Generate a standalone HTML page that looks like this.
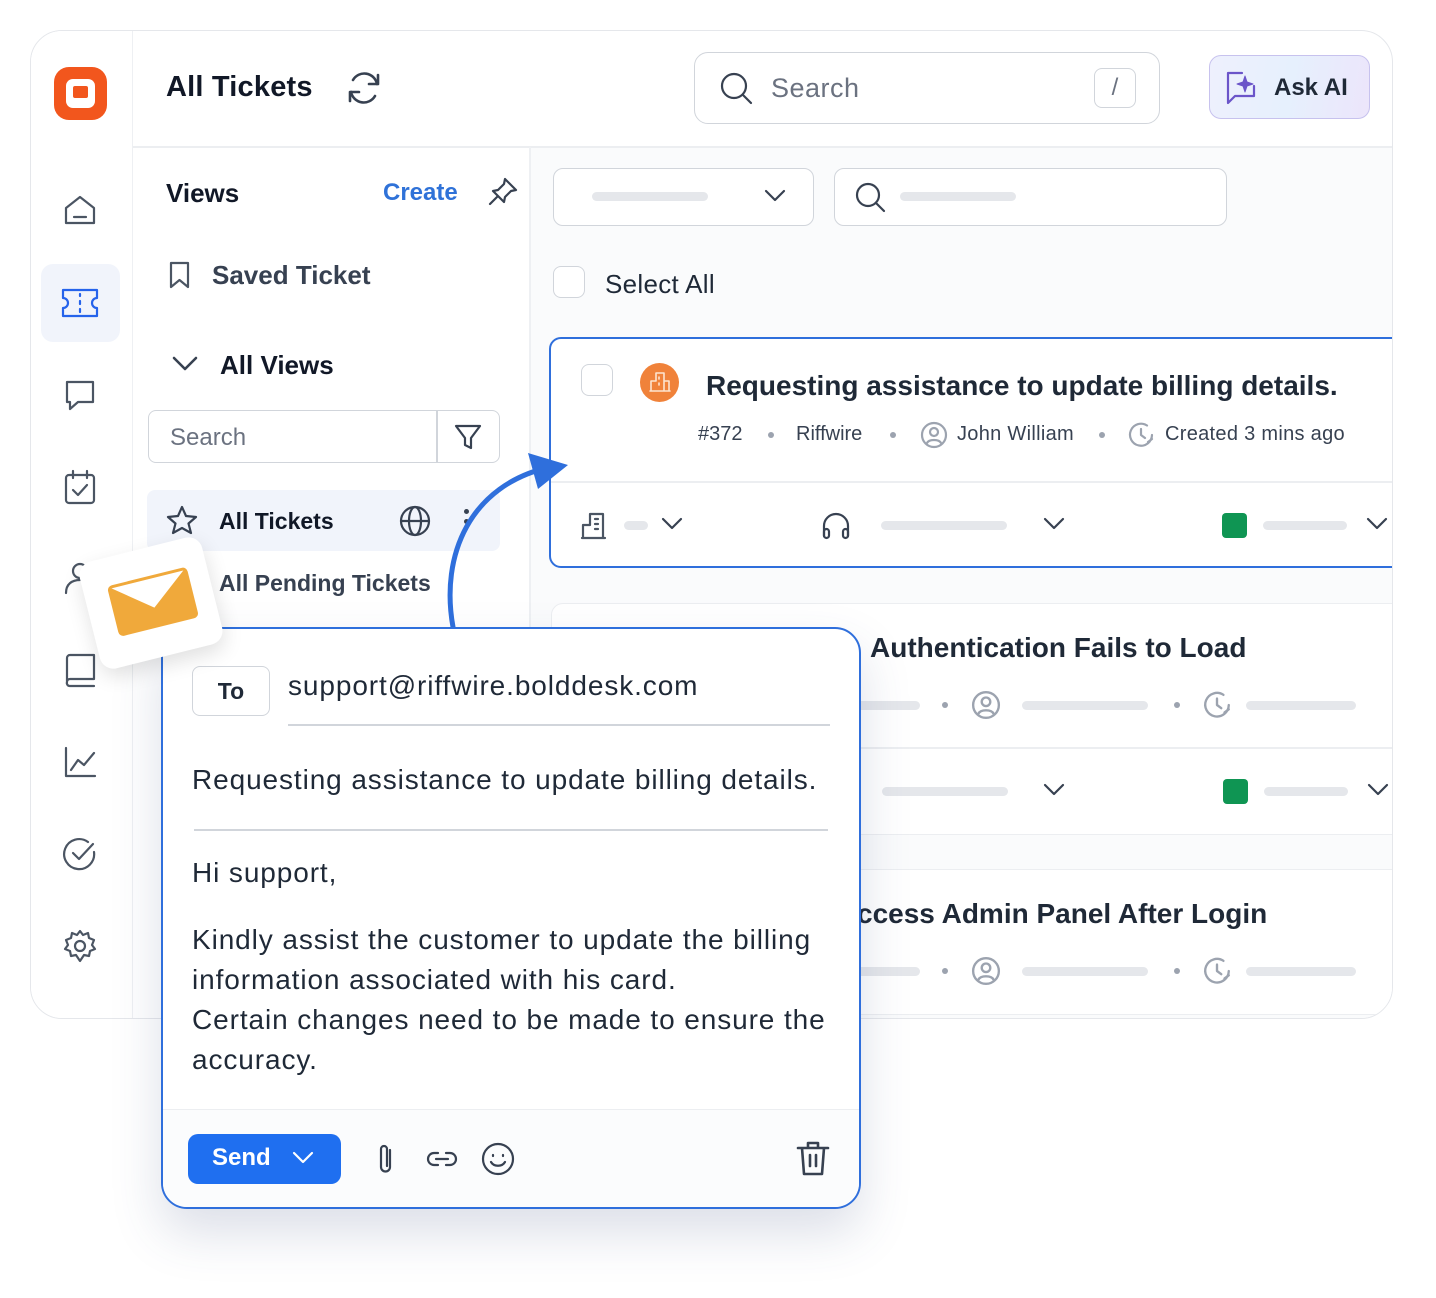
<!DOCTYPE html>
<html><head><meta charset="utf-8">
<style>
*{box-sizing:border-box;margin:0;padding:0}
body{width:1436px;height:1298px;background:#fff;font-family:"Liberation Sans",sans-serif;color:#1f2937;position:relative;overflow:hidden}
.a{position:absolute}
.ic{position:absolute;fill:none;stroke:#4b5563;stroke-width:2.2;stroke-linecap:round;stroke-linejoin:round}
.bar{position:absolute;height:9px;border-radius:5px;background:#e5e7eb}
.t{position:absolute;white-space:nowrap}
.em{font-size:28px;letter-spacing:0.9px}
</style></head><body>
<!-- outer card -->
<div class="a" style="left:30px;top:30px;width:1363px;height:989px;border:1.5px solid #e5e7eb;border-radius:32px;background:#fff;overflow:hidden">
  <div class="a" style="left:0;top:0;width:102px;height:989px;background:#fff;border-right:1.5px solid #eef0f3"></div>
  <div class="a" style="left:102px;top:115px;width:1263px;height:1.5px;background:#eceef1"></div>
  <div class="a" style="left:498px;top:116px;width:1.5px;height:880px;background:#eef0f3"></div>
  <div class="a" style="left:500px;top:117px;width:870px;height:880px;background:#fafbfc"></div>
  <!-- ticket 1 -->
  <div class="a" style="left:518px;top:306px;width:880px;height:231px;border:2px solid #2f6fdc;border-radius:12px;background:#fff"></div>
  <div class="a" style="left:520px;top:450px;width:845px;height:1.5px;background:#eceef1"></div>
  <!-- ticket 2 -->
  <div class="a" style="left:520px;top:572px;width:880px;height:232px;border:1.5px solid #eceef1;border-radius:12px;background:#fff"></div>
  <div class="a" style="left:520px;top:716px;width:842px;height:1.5px;background:#eceef1"></div>
  <!-- ticket 3 -->
  <div class="a" style="left:520px;top:838px;width:880px;height:146px;border:1.5px solid #eceef1;border-radius:12px;background:#fff"></div>
</div>
<!-- logo -->
<div class="a" style="left:54px;top:67px;width:53px;height:53px;background:#f2561d;border-radius:15px"></div>
<div class="a" style="left:66px;top:79px;width:29px;height:29px;background:#fff;border-radius:7px"></div>
<div class="a" style="left:73px;top:86px;width:15px;height:12px;background:#f2561d;border-radius:2px"></div>
<!-- rail icons -->
<div class="a" style="left:41px;top:264px;width:79px;height:78px;background:#f1f4fb;border-radius:12px"></div>
<svg class="ic" style="left:62px;top:192px" width="36" height="36" viewBox="0 0 36 36"><path d="M4 16 L18 5 L32 16 V31 H4 Z"/><path d="M12 25 H24"/></svg>
<svg class="ic" style="left:60px;top:286px;stroke:#2563eb" width="40" height="34" viewBox="0 0 40 34"><path d="M3 4 H37 V12 A5 5 0 0 0 37 22 V30 H3 V22 A5 5 0 0 0 3 12 Z"/><path d="M20 8 V10 M20 15 V18 M20 23 V26"/></svg>
<svg class="ic" style="left:62px;top:377px" width="36" height="36" viewBox="0 0 36 36"><path d="M5 5 H31 V25 H16 L8 32 V25 H5 Z"/></svg>
<svg class="ic" style="left:62px;top:468px" width="36" height="38" viewBox="0 0 36 38"><rect x="4" y="7" width="28" height="28" rx="3"/><path d="M11 3 V10 M25 3 V10 M11 22 L16 27 L25 17"/></svg>
<svg class="ic" style="left:62px;top:560px" width="36" height="36" viewBox="0 0 36 36"><circle cx="18" cy="11" r="7"/><path d="M4 33 C4 24 10 20 18 20"/></svg>
<svg class="ic" style="left:62px;top:652px" width="36" height="38" viewBox="0 0 36 38"><path d="M5 30 V6 A3 3 0 0 1 8 3 H32 V27 H8 A3 3 0 0 0 5 30 A3 3 0 0 0 8 34 H32"/></svg>
<svg class="ic" style="left:62px;top:744px" width="36" height="36" viewBox="0 0 36 36"><path d="M4 4 V32 H33"/><path d="M9 26 L16 16 L22 21 L32 9"/></svg>
<svg class="ic" style="left:62px;top:836px" width="36" height="36" viewBox="0 0 36 36"><path d="M32 16 A15 15 0 1 1 26 6"/><path d="M11 17 L17 23 L31 8"/></svg>
<svg class="ic" style="left:62px;top:928px" width="36" height="36" viewBox="0 0 36 36"><circle cx="18" cy="18" r="5"/><path d="M18 3 L21 7 L26 5 L27 10 L32 12 L30 17 L33 21 L28 23 L27 28 L22 27 L18 33 L14 27 L9 28 L8 23 L3 21 L6 17 L4 12 L9 10 L10 5 L15 7 Z"/></svg>
<!-- header -->
<div class="t" style="left:166px;top:71px;font-size:29px;font-weight:700;color:#111827;letter-spacing:0.2px">All Tickets</div>
<svg class="ic" style="left:345px;top:70px;stroke:#374151;stroke-width:2.6" width="38" height="36" viewBox="0 0 38 36"><path d="M32 14 A13 13 0 0 0 8 10 M6 22 A13 13 0 0 0 30 26"/><path d="M33 5 V14 H24 M5 31 V22 H14"/></svg>
<div class="a" style="left:694px;top:52px;width:466px;height:72px;border:1.5px solid #d1d5db;border-radius:14px;background:#fff"></div>
<svg class="ic" style="left:718px;top:70px;stroke:#374151" width="36" height="36" viewBox="0 0 36 36"><circle cx="16" cy="16" r="12"/><path d="M25 25 L33 33"/></svg>
<div class="t" style="left:771px;top:73px;font-size:27px;color:#6b7280;letter-spacing:0.5px">Search</div>
<div class="a" style="left:1094px;top:68px;width:42px;height:40px;border:1.5px solid #d1d5db;border-radius:8px;text-align:center;font-size:24px;color:#6b7280;line-height:38px">/</div>
<div class="a" style="left:1209px;top:55px;width:161px;height:64px;border:1.5px solid #c7c2ee;border-radius:12px;background:linear-gradient(100deg,#eef0fd,#e6f0fd 50%,#ece5fb)"></div>
<svg class="ic" style="left:1224px;top:70px;stroke:#6b55c9" width="38" height="36" viewBox="0 0 38 36"><path d="M18 3 H4 V26 L4 33 L11 26 H30 V16"/><path d="M21 6 L23 12 L29 14 L23 16 L21 22 L19 16 L13 14 L19 12 Z" fill="#6b55c9" stroke-width="1"/></svg>
<div class="t" style="left:1274px;top:74px;font-size:24px;font-weight:700;color:#1f2937">Ask AI</div>
<!-- views panel -->
<div class="t" style="left:166px;top:178px;font-size:26px;font-weight:700;color:#111827">Views</div>
<div class="t" style="left:383px;top:179px;font-size:24px;font-weight:700;color:#2f72d8">Create</div>
<svg class="ic" style="left:487px;top:176px;stroke:#374151" width="32" height="32" viewBox="0 0 32 32"><path d="M18 3 L29 14 L24 15 L18 21 L17 26 L6 15 L11 14 L17 8 Z M10 21 L3 28"/></svg>
<svg class="ic" style="left:168px;top:260px" width="24" height="30" viewBox="0 0 24 30"><path d="M3 3 H20 V27 L11.5 20 L3 27 Z"/></svg>
<div class="t" style="left:212px;top:260px;font-size:26px;font-weight:700;color:#374151">Saved Ticket</div>
<svg class="ic" style="left:171px;top:352px;stroke:#374151;stroke-width:2.6" width="28" height="24" viewBox="0 0 28 24"><path d="M3 6 L14 17 L25 6"/></svg>
<div class="t" style="left:220px;top:350px;font-size:26px;font-weight:700;color:#111827">All Views</div>
<div class="a" style="left:148px;top:410px;width:352px;height:53px;border:1.5px solid #d1d5db;border-radius:8px;background:#fff"></div>
<div class="a" style="left:436px;top:411px;width:1.5px;height:51px;background:#d1d5db"></div>
<div class="t" style="left:170px;top:424px;font-size:24px;color:#6b7280">Search</div>
<svg class="ic" style="left:453px;top:422px;stroke:#374151" width="30" height="30" viewBox="0 0 30 30"><path d="M3 4 H27 L18 16 V26 L12 23 V16 Z"/></svg>
<div class="a" style="left:147px;top:490px;width:353px;height:61px;background:#f1f4fb;border-radius:8px"></div>
<svg class="ic" style="left:166px;top:505px;stroke:#374151" width="32" height="30" viewBox="0 0 32 30"><path d="M16 2 L20 11 L30 12 L22.5 18.5 L25 28 L16 23 L7 28 L9.5 18.5 L2 12 L12 11 Z"/></svg>
<div class="t" style="left:219px;top:508px;font-size:23px;font-weight:700;color:#111827">All Tickets</div>
<svg class="ic" style="left:399px;top:505px;stroke:#374151" width="32" height="32" viewBox="0 0 32 32"><circle cx="16" cy="16" r="14"/><ellipse cx="16" cy="16" rx="6" ry="14"/><path d="M2 16 H30"/></svg>
<div class="a" style="left:464px;top:509px;width:5px;height:5px;border-radius:3px;background:#374151"></div>
<div class="a" style="left:464px;top:519px;width:5px;height:5px;border-radius:3px;background:#374151"></div>
<div class="t" style="left:219px;top:570px;font-size:23px;font-weight:700;color:#374151">All Pending Tickets</div>
<!-- right filters -->
<div class="a" style="left:553px;top:168px;width:261px;height:58px;border:1.5px solid #d1d5db;border-radius:10px;background:#fff"></div>
<div class="bar" style="left:592px;top:192px;width:116px"></div>
<svg class="ic" style="left:762px;top:186px;stroke:#374151" width="26" height="20" viewBox="0 0 26 20"><path d="M4 5 L13 14 L22 5"/></svg>
<div class="a" style="left:834px;top:168px;width:393px;height:58px;border:1.5px solid #d1d5db;border-radius:10px;background:#fff"></div>
<svg class="ic" style="left:853px;top:180px;stroke:#374151" width="34" height="34" viewBox="0 0 34 34"><circle cx="15" cy="15" r="11"/><path d="M23 23 L31 31"/></svg>
<div class="bar" style="left:900px;top:192px;width:116px"></div>
<div class="a" style="left:553px;top:266px;width:32px;height:32px;border:1.5px solid #d1d5db;border-radius:8px;background:#fff"></div>
<div class="t" style="left:605px;top:269px;font-size:26px;color:#1f2937;letter-spacing:0.3px">Select All</div>
<!-- ticket 1 content -->
<div class="a" style="left:581px;top:364px;width:32px;height:32px;border:1.5px solid #d1d5db;border-radius:8px"></div>
<div class="a" style="left:640px;top:363px;width:39px;height:39px;border-radius:50%;background:#f0823a"></div>
<svg class="ic" style="left:648px;top:370px;stroke:#fde4cf;stroke-width:1.6" width="24" height="24" viewBox="0 0 24 24"><path d="M3 21 V11 H8 V3 H16 V21 M16 11 H21 V21 M2 21 H22 M11 7 V9 M11 13 V15"/></svg>
<div class="t" style="left:706px;top:370px;font-size:28px;font-weight:700;color:#1f2937">Requesting assistance to update billing details.</div>
<div class="t" style="left:698px;top:423px;font-size:20px;color:#374151">#372</div>
<div class="a" style="left:768px;top:432px;width:6px;height:6px;border-radius:3px;background:#9ca3af"></div>
<div class="t" style="left:796px;top:423px;font-size:20px;color:#374151">Riffwire</div>
<div class="a" style="left:890px;top:432px;width:6px;height:6px;border-radius:3px;background:#9ca3af"></div>
<svg class="ic" style="left:920px;top:421px;stroke:#9ca3af" width="28" height="28" viewBox="0 0 28 28"><circle cx="14" cy="14" r="12"/><circle cx="14" cy="11" r="4"/><path d="M7 22 C9 18 19 18 21 22"/></svg>
<div class="t" style="left:957px;top:423px;font-size:20px;color:#374151;letter-spacing:0.3px">John William</div>
<div class="a" style="left:1099px;top:432px;width:6px;height:6px;border-radius:3px;background:#9ca3af"></div>
<svg class="ic" style="left:1127px;top:421px;stroke:#9ca3af" width="28" height="28" viewBox="0 0 28 28"><path d="M25 14 A11 11 0 1 1 20 4.5"/><path d="M14 8 V14 L18 17 M21 21 L25 18"/></svg>
<div class="t" style="left:1165px;top:423px;font-size:20px;color:#374151;letter-spacing:0.3px">Created 3 mins ago</div>
<svg class="ic" style="left:580px;top:509px" width="32" height="32" viewBox="0 0 32 32"><path d="M3 29 V16 H10 V5 H23 V29 M2 29 H25 M15 10 H18 M15 15 H18 M15 20 H18"/></svg>
<div class="bar" style="left:624px;top:521px;width:24px"></div>
<svg class="ic" style="left:659px;top:514px;stroke:#374151" width="26" height="20" viewBox="0 0 26 20"><path d="M4 5 L13 14 L22 5"/></svg>
<svg class="ic" style="left:820px;top:510px;stroke:#374151" width="32" height="32" viewBox="0 0 32 32"><path d="M4 26 V16 A12 12 0 0 1 28 16 V26"/><rect x="4" y="19" width="5" height="9" rx="2.5"/><rect x="23" y="19" width="5" height="9" rx="2.5"/></svg>
<div class="bar" style="left:881px;top:521px;width:126px"></div>
<svg class="ic" style="left:1041px;top:514px;stroke:#374151" width="26" height="20" viewBox="0 0 26 20"><path d="M4 5 L13 14 L22 5"/></svg>
<div class="a" style="left:1222px;top:513px;width:25px;height:25px;border-radius:4px;background:#0f9553"></div>
<div class="bar" style="left:1263px;top:521px;width:84px"></div>
<svg class="ic" style="left:1364px;top:514px;stroke:#374151" width="26" height="20" viewBox="0 0 26 20"><path d="M4 5 L13 14 L22 5"/></svg>
<!-- ticket 2 content -->
<div class="t" style="left:870px;top:632px;font-size:28px;font-weight:700;color:#1f2937">Authentication Fails to Load</div>
<div class="bar" style="left:850px;top:701px;width:70px"></div>
<div class="a" style="left:942px;top:702px;width:6px;height:6px;border-radius:3px;background:#9ca3af"></div>
<svg class="ic" style="left:971px;top:690px;stroke:#9ca3af" width="30" height="30" viewBox="0 0 28 28"><circle cx="14" cy="14" r="12"/><circle cx="14" cy="11" r="4"/><path d="M7 22 C9 18 19 18 21 22"/></svg>
<div class="bar" style="left:1022px;top:701px;width:126px"></div>
<div class="a" style="left:1174px;top:702px;width:6px;height:6px;border-radius:3px;background:#9ca3af"></div>
<svg class="ic" style="left:1202px;top:690px;stroke:#9ca3af" width="30" height="30" viewBox="0 0 28 28"><path d="M25 14 A11 11 0 1 1 20 4.5"/><path d="M14 8 V14 L18 17 M21 21 L25 18"/></svg>
<div class="bar" style="left:1246px;top:701px;width:110px"></div>
<div class="bar" style="left:882px;top:787px;width:126px"></div>
<svg class="ic" style="left:1041px;top:780px;stroke:#374151" width="26" height="20" viewBox="0 0 26 20"><path d="M4 5 L13 14 L22 5"/></svg>
<div class="a" style="left:1223px;top:779px;width:25px;height:25px;border-radius:4px;background:#0f9553"></div>
<div class="bar" style="left:1264px;top:787px;width:84px"></div>
<svg class="ic" style="left:1365px;top:780px;stroke:#374151" width="26" height="20" viewBox="0 0 26 20"><path d="M4 5 L13 14 L22 5"/></svg>
<!-- ticket 3 content -->
<div class="t" style="left:857px;top:898px;font-size:28px;font-weight:700;color:#1f2937">ccess Admin Panel After Login</div>
<div class="bar" style="left:850px;top:967px;width:70px"></div>
<div class="a" style="left:942px;top:968px;width:6px;height:6px;border-radius:3px;background:#9ca3af"></div>
<svg class="ic" style="left:971px;top:956px;stroke:#9ca3af" width="30" height="30" viewBox="0 0 28 28"><circle cx="14" cy="14" r="12"/><circle cx="14" cy="11" r="4"/><path d="M7 22 C9 18 19 18 21 22"/></svg>
<div class="bar" style="left:1022px;top:967px;width:126px"></div>
<div class="a" style="left:1174px;top:968px;width:6px;height:6px;border-radius:3px;background:#9ca3af"></div>
<svg class="ic" style="left:1202px;top:956px;stroke:#9ca3af" width="30" height="30" viewBox="0 0 28 28"><path d="M25 14 A11 11 0 1 1 20 4.5"/><path d="M14 8 V14 L18 17 M21 21 L25 18"/></svg>
<div class="bar" style="left:1246px;top:967px;width:110px"></div>
<!-- arrow -->
<svg class="a" style="left:430px;top:445px" width="150" height="190" viewBox="0 0 150 190"><path d="M23 182 C10 110 40 40 120 22" fill="none" stroke="#2f6fdc" stroke-width="5" stroke-linecap="round"/><path d="M98 8 L138 20 L108 44 Z" fill="#2f6fdc"/></svg>
<!-- email popup -->
<div class="a" style="left:161px;top:627px;width:700px;height:582px;border:2.5px solid #2f6fdc;border-radius:26px;background:#fff;box-shadow:0 24px 50px rgba(60,80,130,.18);overflow:hidden">
  <div class="a" style="left:0;top:480px;width:700px;height:100px;background:#fbfcfd;border-top:1.5px solid #eceef1"></div>
</div>
<div class="a" style="left:192px;top:666px;width:78px;height:50px;border:1.5px solid #d1d5db;border-radius:8px;text-align:center;line-height:48px;font-size:23px;font-weight:700;color:#1f2937">To</div>
<div class="t em" style="left:288px;top:670px;color:#1f2937">support@riffwire.bolddesk.com</div>
<div class="a" style="left:288px;top:724px;width:542px;height:1.5px;background:#d1d5db"></div>
<div class="t em" style="left:192px;top:764px;color:#1f2937">Requesting assistance to update billing details.</div>
<div class="a" style="left:194px;top:829px;width:634px;height:1.5px;background:#d1d5db"></div>
<div class="t em" style="left:192px;top:857px;color:#1f2937">Hi support,</div>
<div class="a em" style="left:192px;top:920px;width:660px;line-height:40px;color:#1f2937">Kindly assist the customer to update the billing<br>information associated with his card.<br>Certain changes need to be made to ensure the<br>accuracy.</div>
<div class="a" style="left:188px;top:1134px;width:153px;height:50px;border-radius:10px;background:#1f6ff0"></div>
<div class="t" style="left:212px;top:1144px;font-size:24px;font-weight:700;color:#fff">Send</div>
<svg class="ic" style="left:290px;top:1148px;stroke:#fff" width="26" height="20" viewBox="0 0 26 20"><path d="M4 5 L13 14 L22 5"/></svg>
<svg class="ic" style="left:373px;top:1142px;stroke:#374151" width="26" height="34" viewBox="0 0 26 34"><path d="M17 8 V25 A4.5 4.5 0 0 1 8 25 V7 A3 3 0 0 1 14 7 V24"/></svg>
<svg class="ic" style="left:424px;top:1145px;stroke:#374151" width="36" height="28" viewBox="0 0 36 28"><path d="M14 8 H10 A6 6 0 0 0 10 20 H14 M22 8 H26 A6 6 0 0 1 26 20 H22 M12 14 H24"/></svg>
<svg class="ic" style="left:480px;top:1141px;stroke:#374151" width="36" height="36" viewBox="0 0 36 36"><circle cx="18" cy="18" r="15"/><path d="M13 14 V15 M23 14 V15 M11 21 C14 26 22 26 25 21"/></svg>
<svg class="ic" style="left:794px;top:1139px;stroke:#374151;stroke-width:2.6" width="38" height="40" viewBox="0 0 38 40"><path d="M4 9 H34 M14 9 V4 H24 V9 M8 9 L10 35 H28 L30 9 M16 16 V27 M22 16 V27"/></svg>
<!-- envelope tile -->
<div class="a" style="left:88px;top:548px;width:126px;height:110px;background:#fff;border-radius:14px;transform:rotate(-14deg);box-shadow:0 8px 20px rgba(0,0,0,.12)"></div>
<svg class="a" style="left:104px;top:562px" width="96" height="80" viewBox="0 0 96 80"><g transform="rotate(-14 48 40)"><rect x="8" y="14" width="82" height="52" rx="5" fill="#f0a93b"/><path d="M12 17 L49 46 L86 17 Z" fill="#fff"/></g></svg>
</body></html>
